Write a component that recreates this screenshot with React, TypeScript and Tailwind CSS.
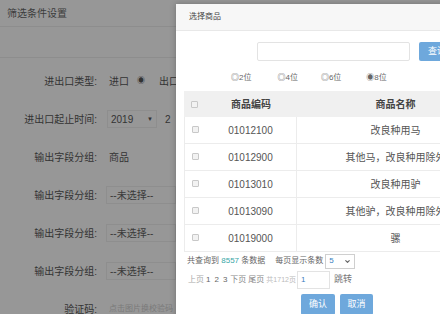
import { ChevronDown } from 'lucide-react';

const font = { fontFamily: '"Liberation Sans", "Noto Sans CJK SC", sans-serif' };

const rows = [
  { code: '01012100', name: '改良种用马' },
  { code: '01012900', name: '其他马，改良种用除外' },
  { code: '01013010', name: '改良种用驴' },
  { code: '01013090', name: '其他驴，改良种用除外' },
  { code: '01019000', name: '骡' },
];

const FormRow = ({ label, children }: { label: string; children: React.ReactNode }) => (
  <div className="flex items-center h-[38px]">
    <div className="w-[98px] text-right pr-[1px]">{label}</div>
    <div className="flex items-center pl-[11px] gap-2">{children}</div>
  </div>
);

const Checkbox = () => (
  <span className="inline-block w-[7px] h-[7px] border border-[#c8c8c8] bg-[#f2f2f2] rounded-[1px]" />
);

const App = () => {
  return (
    <div className="relative w-[440px] h-[314px] overflow-hidden bg-[#979797] text-[#333] text-[10px]" style={font}>
      {/* Background page (under overlay) */}
      <div className="h-[27px] flex items-center pl-[7px] border-b border-[#8d8d8d] text-[10px] text-[#3c3c3c]">
        筛选条件设置
      </div>
      <div className="h-[31px] border-b border-[#8d8d8d]" />
      <div className="pt-[4px] text-[#333]">
        <FormRow label="进出口类型:">
          <span>进口</span>
          <span className="text-[8px]">◉</span>
          <span className="ml-[6px]">出口</span>
        </FormRow>
        <FormRow label="进出口起止时间:">
          <div className="flex items-center justify-between w-[50px] h-[18px] border border-[#8e8e8e] px-[3px] -ml-[2px]">
            <span>2019</span>
            <span className="text-[6px]">▼</span>
          </div>
          <span>2</span>
        </FormRow>
        <FormRow label="输出字段分组:">
          <span>商品</span>
        </FormRow>
        <FormRow label="输出字段分组:">
          <div className="w-[70px] h-[18px] border border-[#8e8e8e] px-[3px] flex items-center text-[#3a3a3a] -ml-[3px]">--未选择--</div>
        </FormRow>
        <FormRow label="输出字段分组:">
          <div className="w-[70px] h-[18px] border border-[#8e8e8e] px-[3px] flex items-center text-[#3a3a3a] -ml-[3px]">--未选择--</div>
        </FormRow>
        <FormRow label="输出字段分组:">
          <div className="w-[70px] h-[18px] border border-[#8e8e8e] px-[3px] flex items-center text-[#3a3a3a] -ml-[3px]">--未选择--</div>
        </FormRow>
        <FormRow label="验证码:">
          <span className="text-[#7a7a7a] text-[8px]">点击图片换校验码</span>
        </FormRow>
      </div>

      {/* Modal */}
      <div className="absolute left-[176px] top-[4px] w-[300px] h-[330px] bg-white shadow-[0_0_6px_rgba(0,0,0,0.25)]">
        <div className="h-[27px] bg-[#f7f7f7] border-b border-[#e8e8e8] flex items-center pl-[13px] text-[8px] text-[#444]">
          选择商品
        </div>
        <div className="flex items-center mt-[11px] ml-[81px] gap-[9px]">
          <div className="w-[153px] h-[19px] border border-[#e3e3e3] rounded-[2px]" />
          <div className="w-[40px] h-[19px] bg-[#6ea8dc] rounded-[2px] flex items-center pl-[9px] text-white text-[9px]">查询</div>
        </div>
        <div className="flex items-center mt-[10px] h-[14px] text-[8px] text-[#666]">
          <span className="ml-[55px]">◎2位</span>
          <span className="ml-[26px]">◎4位</span>
          <span className="ml-[23px]">◎6位</span>
          <span className="ml-[25px]">◉8位</span>
        </div>
        <div className="ml-[8px] mt-[6px] w-[310px] text-[10px] text-[#555]">
          <div className="flex h-[26px] bg-[#f0f0f0] font-bold text-[#444] items-center">
            <div className="w-[21px] flex justify-center"><Checkbox /></div>
            <div className="w-[92px] text-center">商品编码</div>
            <div className="flex-1 text-center">商品名称</div>
          </div>
          {rows.map((r) => (
            <div key={r.code} className="flex h-[27px] items-center border-b border-[#ececec] border-l border-l-[#ececec]">
              <div className="w-[20px] flex justify-center self-start pt-[9px]"><Checkbox /></div>
              <div className="w-[92px] h-full flex items-center justify-center border-r border-[#ececec]">{r.code}</div>
              <div className="flex-1 text-center">{r.name}</div>
            </div>
          ))}
        </div>
        <div className="ml-[11px] mt-[1px] flex items-center h-[16px] text-[8px] text-[#666]">
          <span>共查询到 <span className="text-[#39a7a7]">8557</span> 条数据</span>
          <span className="ml-[10px]">每页显示条数</span>
          <div className="ml-[2px] w-[30px] h-[15px] border border-[#cfcfcf] flex items-center justify-between px-[3px] text-[8px]">
            <span className="text-[#3a7fc0]">5</span>
            <ChevronDown className="w-[7px] h-[7px]" strokeWidth={4} />
          </div>
        </div>
        <div className="ml-[12px] mt-[2px] flex items-center h-[18px] text-[8px] text-[#aaa]">
          <span>上页</span>
          <span className="ml-[2px] text-[#666]">1</span>
          <span className="ml-[4px] text-[#666]">2</span>
          <span className="ml-[4px] text-[#666]">3</span>
          <span className="ml-[3px] text-[#888]">下页</span>
          <span className="ml-[2px] text-[#888]">尾页</span>
          <span className="ml-[2px] text-[7px] text-[#bbb]">共1712页</span>
          <div className="ml-[1px] w-[33px] h-[18px] border border-[#e3e3e3] flex items-center pl-[3px] text-[#3a7fc0]">1</div>
          <span className="ml-[4px] text-[9px] text-[#777]">跳转</span>
        </div>
        <div className="flex ml-[125px] mt-[5px] gap-[5px]">
          <div className="w-[34px] h-[21px] bg-[#6ea8dc] text-white text-[9px] flex items-center justify-center rounded-[2px]">确认</div>
          <div className="w-[33px] h-[21px] bg-[#6ea8dc] text-white text-[9px] flex items-center justify-center rounded-[2px]">取消</div>
        </div>
      </div>
    </div>
  );
};

export default App;
